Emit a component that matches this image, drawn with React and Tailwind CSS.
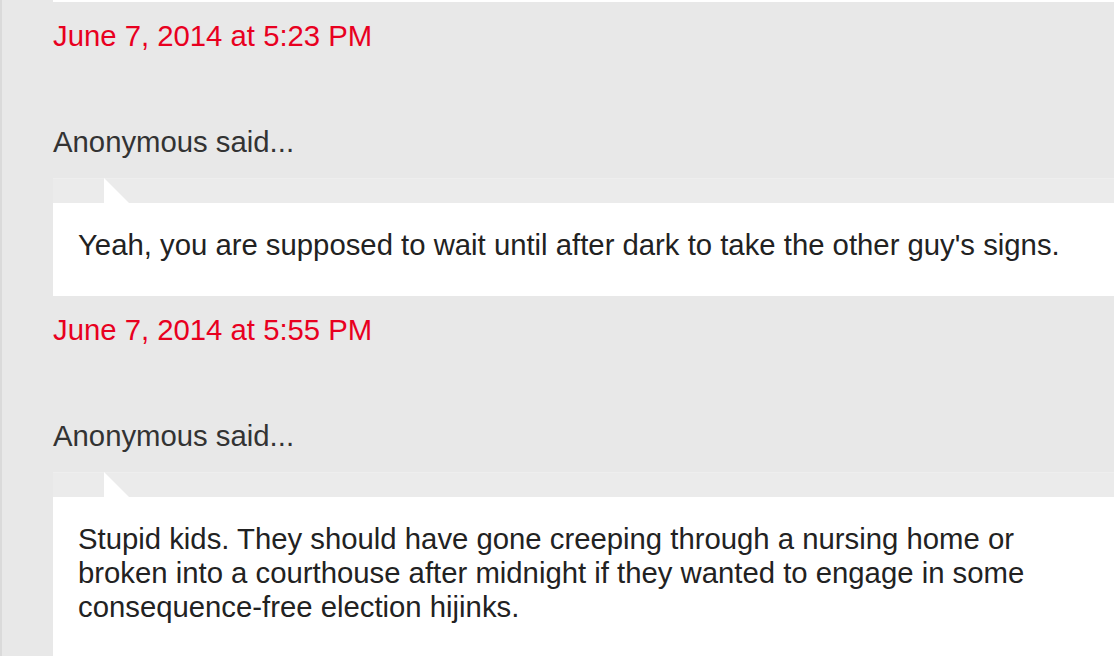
import React from 'react';

const comments = [
  {
    date: 'June 7, 2014 at 5:23 PM',
    author: 'Anonymous',
    body: "Yeah, you are supposed to wait until after dark to take the other guy's signs.",
  },
  {
    date: 'June 7, 2014 at 5:55 PM',
    author: 'Anonymous',
    body: 'Stupid kids. They should have gone creeping through a nursing home or broken into a courthouse after midnight if they wanted to engage in some consequence-free election hijinks.',
  },
];

const Comment = ({ date, author, body }) => (
  <div>
    <a href="#" className="mt-[17px] block text-[29.3px] leading-[34px] text-[#e8001f]">
      {date}
    </a>
    <div className="mt-[72px] text-[29.3px] leading-[34px] text-[#333]">{author} said...</div>
    {/* bubble pointer */}
    <div className="mt-[19px] flex h-[25px] border-t border-[#eeeeee] bg-[#ebebeb]">
      <svg className="ml-[51px] -mt-px" width="27" height="26" viewBox="0 0 27 26">
        <polygon points="0,0 0,26 26,26" fill="#ffffff" />
      </svg>
    </div>
    <div className="bg-white pt-[25px] pb-[34px] pl-[25px] pr-[25px] text-[29.3px] leading-[34px] text-[#222]">
      {body}
    </div>
  </div>
);

export default function App() {
  return (
    <div
      className="h-[656px] w-[1114px] overflow-hidden border-l-2 border-[#dadada] bg-[#e8e8e8] pl-[51px]"
      style={{ fontFamily: '"Liberation Sans", Arial, sans-serif' }}
    >
      <div className="h-[2px] bg-white" />
      {comments.map((c, i) => (
        <Comment key={i} {...c} />
      ))}
    </div>
  );
}
